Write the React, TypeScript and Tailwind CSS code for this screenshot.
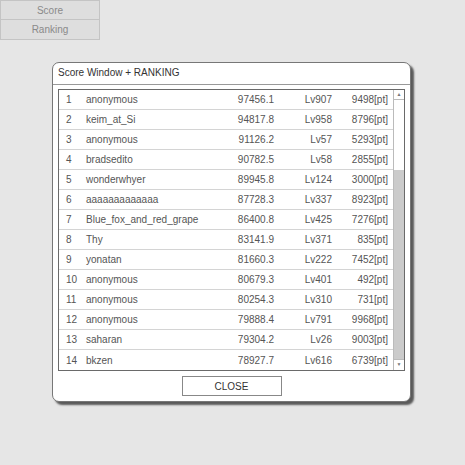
import React from 'react'

const rows: [number, string, string, string, string][] = [
  [1, 'anonymous', '97456.1', 'Lv907', '9498[pt]'],
  [2, 'keim_at_Si', '94817.8', 'Lv958', '8796[pt]'],
  [3, 'anonymous', '91126.2', 'Lv57', '5293[pt]'],
  [4, 'bradsedito', '90782.5', 'Lv58', '2855[pt]'],
  [5, 'wonderwhyer', '89945.8', 'Lv124', '3000[pt]'],
  [6, 'aaaaaaaaaaaaa', '87728.3', 'Lv337', '8923[pt]'],
  [7, 'Blue_fox_and_red_grape', '86400.8', 'Lv425', '7276[pt]'],
  [8, 'Thy', '83141.9', 'Lv371', '835[pt]'],
  [9, 'yonatan', '81660.3', 'Lv222', '7452[pt]'],
  [10, 'anonymous', '80679.3', 'Lv401', '492[pt]'],
  [11, 'anonymous', '80254.3', 'Lv310', '731[pt]'],
  [12, 'anonymous', '79888.4', 'Lv791', '9968[pt]'],
  [13, 'saharan', '79304.2', 'Lv26', '9003[pt]'],
  [14, 'bkzen', '78927.7', 'Lv616', '6739[pt]'],
]

export default function App() {
  return (
    <div
      className="h-[465px] w-[465px] bg-[#e6e6e6] text-[10px] text-[#555]"
      style={{fontFamily: '"Liberation Sans", Arial, sans-serif'}}
    >
      <div className="flex w-[100px] flex-col">
        <button className="h-[20px] border border-[#c4c4c4] bg-[#dedede] text-[#8a8a8a]">Score</button>
        <button className="h-[20px] border border-t-0 border-[#c4c4c4] bg-[#dedede] text-[#8a8a8a]">
          Ranking
        </button>
      </div>

      <div className="ml-[52px] mt-[22px] flex h-[340px] w-[359px] flex-col rounded-[7px] border border-[#777] bg-white shadow-[3px_3px_2px_#5a5a5a]">
        <div className="flex h-[22px] shrink-0 items-end border-b border-[#999] px-[5px] pb-[4px] text-[#333]">
          Score Window + RANKING
        </div>

        <div className="mx-[5px] mt-[4px] flex h-[282px] shrink-0 border border-[#6a6a6a]">
          <div className="flex min-w-0 flex-1 flex-col">
            {rows.map(([rank, name, score, lv, pt]) => (
              <div
                key={rank}
                className="flex h-[20px] shrink-0 items-center border-b border-[#d4d4d4] last:border-b-0"
              >
                <span className="w-[27px] shrink-0 pl-[7px]">{rank}</span>
                <span className="min-w-0 flex-1 whitespace-nowrap">{name}</span>
                <span className="w-[55px] shrink-0 text-right">{score}</span>
                <span className="w-[58px] shrink-0 text-right">{lv}</span>
                <span className="w-[61px] shrink-0 pr-[5px] text-right">{pt}</span>
              </div>
            ))}
          </div>
          <div className="flex w-[11px] shrink-0 flex-col border-l border-[#bbb]">
            <div className="flex h-[10px] items-center justify-center border-b border-[#bbb] text-[5px] text-[#777]">
              ▲
            </div>
            <div className="h-[70px] bg-white" />
            <div className="flex-1 bg-[#cbcbcb]" />
            <div className="flex h-[11px] items-center justify-center border-t border-[#bbb] text-[5px] text-[#777]">
              ▼
            </div>
          </div>
        </div>

        <div className="flex flex-1 items-center justify-center">
          <button className="h-[20px] w-[100px] border border-[#888] bg-white text-[#333]">CLOSE</button>
        </div>
      </div>
    </div>
  )
}
